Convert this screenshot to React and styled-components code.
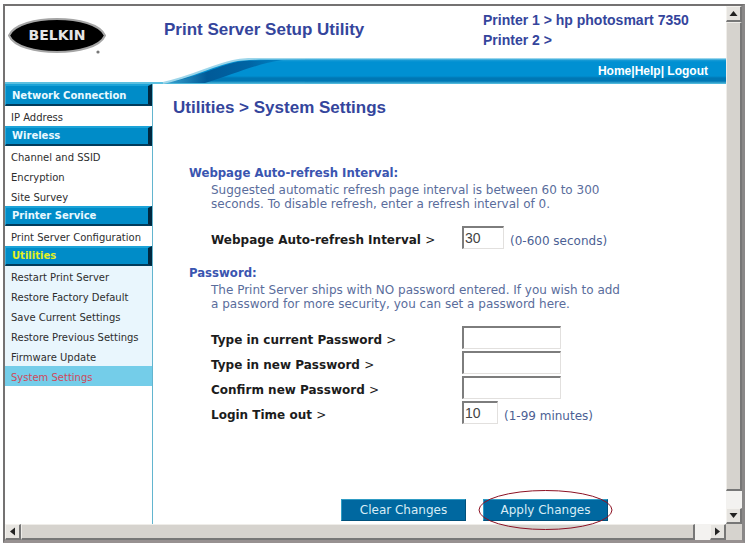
import * as React from 'react';
import styled, { createGlobalStyle } from 'styled-components';

const GlobalStyle = createGlobalStyle`
  body {
    margin: 0;
    background: #fff;
    font-family: 'DejaVu Sans', Verdana, sans-serif;
  }
`;

const Frame = styled.div`
  margin: 4px 3px;
  border: 2px solid #747272;
  border-right: 3px solid #8a8888;
  border-bottom: 3px solid #979191;
  display: grid;
  grid-template-columns: minmax(0, 1fr) 16px;
  grid-template-rows: auto 16px;
`;

const Page = styled.div`
  background: #fff;
`;

const Header = styled.header`
  display: flex;
  justify-content: space-between;
  height: 52px;
`;

const Logo = styled.svg`
  display: block;
  width: 98px;
  height: 38px;
  margin: 11px 0 0 3px;
`;

const ProductName = styled.div`
  flex: 1;
  padding: 14px 0 0 58px;
  font: bold 17px/20px 'Liberation Sans', Arial, sans-serif;
  color: #34459c;
`;

const Printers = styled.div`
  width: 243px;
  padding-top: 4px;
  font: bold 14px/20px 'Liberation Sans', Arial, sans-serif;
  color: #34459c;
`;

const Banner = styled.div`
  display: flex;
  height: 26px;
`;

const Swoosh = styled.svg`
  display: block;
  width: 300px;
  height: 26px;
`;

const TopNav = styled.nav`
  flex: 1;
  display: flex;
  justify-content: flex-end;
  padding-right: 18px;
  font: bold 12px/26px 'Liberation Sans', Arial, sans-serif;
  color: #fff;
  background: linear-gradient(
    #c4e8f4 0,
    #1b9dd6 2px,
    #0090d2 4px,
    #0090d2 18px,
    #0077b4 20px,
    #0077b4 23px,
    #5cc3e2 26px
  );
`;

const TopLink = styled.a`
  color: #fff;
  text-decoration: none;
`;

const Body = styled.div`
  display: flex;
`;

const Sidebar = styled.nav`
  flex: none;
  width: 147px;
  border-right: 1px solid #62b5cf;
`;

const MenuTitle = styled.h2`
  margin: 0;
  padding-left: 6px;
  border-style: solid;
  border-width: 2px 4px 2px 1px;
  border-color: #1ba3d8 #00283f #003c5c #35a9d6;
  background: #008cc8;
  font: bold 10px/16px 'DejaVu Sans', Verdana, sans-serif;
  color: ${props => (props.$current ? '#e4f01e' : '#e9f9ff')};

  &:first-child {
    padding-top: 2px;
  }
`;

const MenuList = styled.ul`
  margin: 0;
  padding: 0;
  list-style: none;
  background: ${props => (props.$current ? '#e9f6fd' : '#fff')};
`;

const MenuLink = styled.a`
  display: block;
  padding: 4px 0 0 6px;
  font-size: 10px;
  line-height: 16px;
  white-space: nowrap;
  text-decoration: none;
  color: ${props => (props.$active ? '#cf4a5c' : '#2e2e2e')};
  background: ${props => (props.$active ? '#74cde9' : 'transparent')};
`;

const Main = styled.form`
  flex: 1;
  padding: 12px 0 3px 20px;
`;

const Title = styled.h1`
  margin: 0 0 44px;
  font: bold 17px/24px 'Liberation Sans', Arial, sans-serif;
  color: #34459c;
`;

const Section = styled.section`
  padding-left: 16px;
  margin-bottom: 15px;
`;

const SectionTitle = styled.h3`
  margin: 0;
  font: bold 13px/18px 'DejaVu Sans Condensed', Tahoma, sans-serif;
  color: #3a55b0;
`;

const Description = styled.p`
  margin: 1px 0 15px;
  padding-left: 22px;
  font-size: 12px;
  line-height: 14px;
  color: #5a6d9c;
`;

const Fields = styled.div`
  display: grid;
  gap: 2px;
  padding-left: 22px;
`;

const Field = styled.div`
  display: grid;
  grid-template-columns: 251px auto 1fr;
  align-items: center;
  font-size: 12px;
  line-height: 15px;
`;

const Label = styled.label`
  padding-top: 6px;
  font-weight: bold;
  color: #1c1c1c;
`;

const Arrow = styled.span`
  font-weight: normal;
`;

const Input = styled.input`
  box-sizing: border-box;
  width: ${props => props.$width}px;
  height: 23px;
  padding: 0 1px;
  border: 1px solid #e2e0de;
  border-top: 2px solid #7d7d7d;
  border-left: 2px solid #7d7d7d;
  border-radius: 0;
  background: #fff;
  font: 14px 'Liberation Sans', Arial, sans-serif;
  color: #444;
  outline: none;
`;

const Hint = styled.span`
  padding: 8px 0 0 6px;
  color: #4c5f94;
`;

const Actions = styled.div`
  display: flex;
  gap: 17px;
  margin-top: 75px;
  padding-left: 168px;
`;

const Button = styled.button`
  width: 125px;
  height: 22px;
  padding: 0;
  border: 1px solid #2f9cc4;
  border-right-color: #00507a;
  border-bottom-color: #00507a;
  background: #0068a0;
  font: 12px 'DejaVu Sans', Verdana, sans-serif;
  color: #d8edf6;
`;

const Highlight = styled.div`
  position: relative;

  svg {
    position: absolute;
    top: -10px;
    left: -5px;
    width: 135px;
    height: 42px;
    pointer-events: none;
  }
`;

const Scrollbar = styled.div`
  display: flex;
  flex-direction: ${props => (props.$vertical ? 'column' : 'row')};
  background: #f3f2f0;
`;

const ScrollButton = styled.button`
  box-sizing: border-box;
  flex: none;
  width: 16px;
  height: 16px;
  padding: 0;
  border: 1px solid #f4f2ee;
  border-right: 2px solid #777;
  border-bottom: 2px solid #777;
  background: #e6e4e0;

  svg {
    display: block;
    width: 13px;
    height: 13px;
  }
`;

const Thumb = styled.div`
  flex: 1;
  margin: ${props => (props.$vertical ? '0 0 17px' : '0 15px 0 0')};
  border: 1px solid #efede9;
  border-right: 2px solid #777;
  border-bottom: 2px solid #777;
  background: #d6d3ce;
`;

const Corner = styled.div`
  background: #d6d3ce;
`;

const menu = [
  { title: 'Network Connection', items: ['IP Address'] },
  { title: 'Wireless', items: ['Channel and SSID', 'Encryption', 'Site Survey'] },
  { title: 'Printer Service', items: ['Print Server Configuration'] },
  {
    title: 'Utilities',
    current: true,
    items: [
      'Restart Print Server',
      'Restore Factory Default',
      'Save Current Settings',
      'Restore Previous Settings',
      'Firmware Update',
      'System Settings',
    ],
  },
];

const arrows = {
  up: 'M6.5 4 L10.5 9 H2.5 Z',
  down: 'M6.5 9 L10.5 4 H2.5 Z',
  left: 'M4 6.5 L9 2.5 V10.5 Z',
  right: 'M9 6.5 L4 2.5 V10.5 Z',
};

function ScrollArrow({ direction }) {
  return (
    <ScrollButton type="button" aria-label={`Scroll ${direction}`}>
      <svg viewBox="0 0 13 13">
        <path d={arrows[direction]} fill="#222" />
      </svg>
    </ScrollButton>
  );
}

function FormField({ id, label, hint, width = 99, ...rest }) {
  return (
    <Field>
      <Label htmlFor={id}>
        {label} <Arrow>&gt;</Arrow>
      </Label>
      <Input id={id} $width={width} {...rest} />
      {hint && <Hint>{hint}</Hint>}
    </Field>
  );
}

function BelkinLogo() {
  return (
    <Logo viewBox="0 0 98 38" role="img" aria-label="Belkin">
      <path
        d="M1 18.5 C6 7 28 2 49 2 C70 2 92 7 97 18.5 C92 30 70 35 49 35 C28 35 6 30 1 18.5 Z"
        fill="#000"
        stroke="#a5a5a5"
        strokeWidth="2"
      />
      <text
        x="49"
        y="23"
        textAnchor="middle"
        fontFamily="DejaVu Sans, Verdana, sans-serif"
        fontWeight="bold"
        fontSize="14"
        fill="#e6e6e6"
      >
        BELKIN
      </text>
      <circle cx="90" cy="35" r="1.6" fill="#777" />
    </Logo>
  );
}

function BannerSwoosh() {
  return (
    <Swoosh viewBox="0 0 300 26" aria-hidden="true">
      <defs>
        <linearGradient id="bar" x1="0" y1="0" x2="0" y2="26" gradientUnits="userSpaceOnUse">
          <stop offset="0" stopColor="#c4e8f4" />
          <stop offset="0.08" stopColor="#1b9dd6" />
          <stop offset="0.15" stopColor="#0090d2" />
          <stop offset="0.69" stopColor="#0090d2" />
          <stop offset="0.77" stopColor="#0077b4" />
          <stop offset="0.88" stopColor="#0077b4" />
          <stop offset="1" stopColor="#5cc3e2" />
        </linearGradient>
        <linearGradient id="fold" x1="160" y1="0" x2="280" y2="0" gradientUnits="userSpaceOnUse">
          <stop offset="0" stopColor="#3aa6d2" />
          <stop offset="0.35" stopColor="#005a98" />
          <stop offset="0.7" stopColor="#0064a4" />
          <stop offset="1" stopColor="#0086c8" />
        </linearGradient>
      </defs>
      <rect y="24" width="170" height="2" fill="#5cc0e0" />
      <path d="M158 25 C190 18 205 8 228 3 C242 0 262 0 300 0 V26 H158 Z" fill="url(#bar)" />
      <path d="M162 25 C192 19 210 9 232 4 C245 2 260 2 278 2 C250 6 230 16 200 25 Z" fill="url(#fold)" />
      <path
        d="M158 25 C190 18 205 8 228 3 C242 0 262 0 300 0"
        fill="none"
        stroke="#9ed6ea"
        strokeWidth="2"
      />
    </Swoosh>
  );
}

function App() {
  return (
    <>
      <GlobalStyle />
      <Frame>
        <Page>
          <Header>
            <BelkinLogo />
            <ProductName>Print Server Setup Utility</ProductName>
            <Printers>
              <div>Printer 1 &gt; hp photosmart 7350</div>
              <div>Printer 2 &gt;</div>
            </Printers>
          </Header>
          <Banner>
            <BannerSwoosh />
            <TopNav>
              <TopLink href="#home">Home</TopLink>|
              <TopLink href="#help">Help</TopLink>|&nbsp;
              <TopLink href="#logout">Logout</TopLink>
            </TopNav>
          </Banner>
          <Body>
            <Sidebar>
              {menu.map(group => (
                <React.Fragment key={group.title}>
                  <MenuTitle $current={group.current}>{group.title}</MenuTitle>
                  <MenuList $current={group.current}>
                    {group.items.map(item => (
                      <li key={item}>
                        <MenuLink href="#menu" $active={item === 'System Settings'}>
                          {item}
                        </MenuLink>
                      </li>
                    ))}
                  </MenuList>
                </React.Fragment>
              ))}
            </Sidebar>
            <Main onSubmit={e => e.preventDefault()}>
              <Title>Utilities &gt; System Settings</Title>
              <Section>
                <SectionTitle>Webpage Auto-refresh Interval:</SectionTitle>
                <Description>
                  Suggested automatic refresh page interval is between 60 to 300
                  <br />
                  seconds. To disable refresh, enter a refresh interval of 0.
                </Description>
                <Fields>
                  <FormField
                    id="refresh"
                    label="Webpage Auto-refresh Interval"
                    width={42}
                    defaultValue="30"
                    hint="(0-600 seconds)"
                  />
                </Fields>
              </Section>
              <Section>
                <SectionTitle>Password:</SectionTitle>
                <Description>
                  The Print Server ships with NO password entered. If you wish to add
                  <br />a password for more security, you can set a password here.
                </Description>
                <Fields>
                  <FormField id="current" type="password" label="Type in current Password" />
                  <FormField id="new" type="password" label="Type in new Password" />
                  <FormField id="confirm" type="password" label="Confirm new Password" />
                  <FormField
                    id="timeout"
                    label="Login Time out"
                    width={36}
                    defaultValue="10"
                    hint="(1-99 minutes)"
                  />
                </Fields>
              </Section>
              <Actions>
                <Button type="reset">Clear Changes</Button>
                <Highlight>
                  <Button type="submit">Apply Changes</Button>
                  <svg viewBox="0 0 135 42" aria-hidden="true">
                    <ellipse cx="67.5" cy="21" rx="66.5" ry="19.5" fill="none" stroke="#8c1224" />
                  </svg>
                </Highlight>
              </Actions>
            </Main>
          </Body>
        </Page>
        <Scrollbar $vertical>
          <ScrollArrow direction="up" />
          <Thumb $vertical />
          <ScrollArrow direction="down" />
        </Scrollbar>
        <Scrollbar>
          <ScrollArrow direction="left" />
          <Thumb />
          <ScrollArrow direction="right" />
        </Scrollbar>
        <Corner />
      </Frame>
    </>
  );
}

export default App;
